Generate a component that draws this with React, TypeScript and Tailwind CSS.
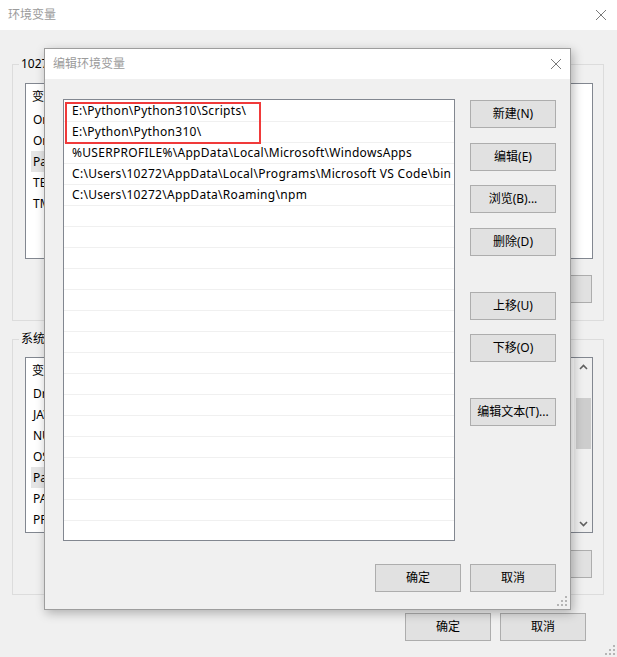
import React from 'react'

const font = "font-['Noto_Sans','Noto_Sans_CJK_SC',sans-serif]"

function Btn({ children, className = '' }: { children: React.ReactNode; className?: string }) {
  return (
    <div
      className={`w-[86px] h-[28px] shrink-0 flex items-center justify-center border border-[#adadad] bg-[#e1e1e1] text-[12px] text-black ${className}`}
    >
      {children}
    </div>
  )
}

function CloseX() {
  return (
    <svg width="12" height="12" viewBox="0 0 12 12">
      <path d="M1 1 L11 11 M11 1 L1 11" stroke="#7a7a7a" strokeWidth="1" fill="none" />
    </svg>
  )
}

function Chevron({ up }: { up?: boolean }) {
  return (
    <svg width="9" height="6" viewBox="0 0 9 6">
      <path d={up ? 'M1 5 L4.5 1.5 L8 5' : 'M1 1 L4.5 4.5 L8 1'} stroke="#606060" strokeWidth="1.6" fill="none" />
    </svg>
  )
}

// background list view, only the left edge shows past the dialog
function VarList({ rows, selected, scroll }: { rows: string[]; selected: number; scroll?: boolean }) {
  return (
    <div className="relative h-[176px] border border-[#828790] bg-white overflow-hidden">
      <div className="h-[25px] flex items-center pl-[6px] text-[12px]">
        <span className="w-[140px]">变量</span>
        <span>值</span>
      </div>
      {rows.map((r, i) => (
        <div
          key={i}
          className={`w-[160px] h-[21px] ml-[5px] pl-[2px] flex items-center text-[12px] text-black whitespace-nowrap ${i === selected ? 'bg-[#e5e5e5]' : ''}`}
        >
          {r}
        </div>
      ))}
      {scroll && (
        <div className="absolute right-0 top-0 bottom-0 w-[18px] bg-[#f0f0f0] flex flex-col items-center">
          <div className="h-[17px] flex items-center justify-center">
            <Chevron up />
          </div>
          <div className="mt-[23px] w-[15px] h-[51px] bg-[#cdcdcd]" />
          <div className="flex-1" />
          <div className="h-[17px] flex items-center justify-center">
            <Chevron />
          </div>
        </div>
      )}
    </div>
  )
}

export default function App() {
  const userVars = ['OneDrive', 'OneDriveConsumer', 'Path', 'TEMP', 'TMP']
  const sysVars = ['DriverData', 'JAVA_HOME', 'NUMBER_OF_PROCESSORS', 'OS', 'Path', 'PATHEXT', 'PROCESSOR_ARCHITECTURE']

  const paths = [
    'E:\\Python\\Python310\\Scripts\\',
    'E:\\Python\\Python310\\',
    '%USERPROFILE%\\AppData\\Local\\Microsoft\\WindowsApps',
    'C:\\Users\\10272\\AppData\\Local\\Programs\\Microsoft VS Code\\bin',
    'C:\\Users\\10272\\AppData\\Roaming\\npm',
  ]
  const rows = [...paths, ...Array(16).fill('')]

  return (
    <div className={`relative w-[617px] h-[657px] bg-[#f0f0f0] overflow-hidden ${font}`}>
      {/* background window: 环境变量 */}
      <div className="h-[30px] bg-white flex items-center justify-between pl-[8px] pr-[10px]">
        <span className="text-[12px] text-[#9b9b9b]">环境变量</span>
        <CloseX />
      </div>
      <div className="pl-[12px] pr-[13px]">
        <fieldset className="mt-[26px] h-[265px] border border-[#dcdcdc] pl-[12px] pr-[10px]">
          <legend className="-ml-[6px] px-[2px] text-[12px] leading-[16px] text-black">10272 的用户变量(U)</legend>
          <div className="mt-[11px]">
            <VarList rows={userVars} selected={2} />
          </div>
          <div className="mt-[16px] flex justify-end gap-[9px] pr-[1px]">
            <Btn>新建(N)...</Btn>
            <Btn>编辑(E)...</Btn>
            <Btn>删除(D)</Btn>
          </div>
        </fieldset>
        <fieldset className="mt-[10px] h-[264px] border border-[#dcdcdc] pl-[12px] pr-[10px]">
          <legend className="-ml-[6px] px-[2px] text-[12px] leading-[16px] text-black">系统变量(S)</legend>
          <div className="mt-[10px]">
            <VarList rows={sysVars} selected={4} scroll />
          </div>
          <div className="mt-[17px] flex justify-end gap-[9px] pr-[1px]">
            <Btn>新建(W)...</Btn>
            <Btn>编辑(I)...</Btn>
            <Btn>删除(L)</Btn>
          </div>
        </fieldset>
      </div>
      <div className="mt-[18px] flex justify-end gap-[9px] pr-[31px]">
        <Btn>确定</Btn>
        <Btn>取消</Btn>
      </div>

      {/* resize grip */}
      <svg className="absolute right-[2px] bottom-[2px]" width="10" height="10" viewBox="0 0 10 10">
        <g fill="#b5b5b5">
          <rect x="8" y="0" width="2" height="2" />
          <rect x="4" y="4" width="2" height="2" />
          <rect x="8" y="4" width="2" height="2" />
          <rect x="0" y="8" width="2" height="2" />
          <rect x="4" y="8" width="2" height="2" />
          <rect x="8" y="8" width="2" height="2" />
        </g>
      </svg>

      {/* dialog: 编辑环境变量 */}
      <div className="absolute left-[44px] top-[48px] w-[527px] h-[562px] border border-[#9d9d9d] bg-[#f0f0f0] flex flex-col shadow-[2px_3px_10px_rgba(0,0,0,0.28)]">
        <div className="h-[30px] bg-white flex items-center justify-between pl-[8px] pr-[8px]">
          <span className="text-[12px] text-[#9b9b9b]">编辑环境变量</span>
          <CloseX />
        </div>
        <div className="flex-1 flex flex-col pl-[18px] pt-[20px]">
          <div className="flex">
            <div className="relative w-[392px] h-[442px] border border-[#828790] bg-white pt-[1px] overflow-hidden">
              {rows.map((p, i) => (
                <div
                  key={i}
                  className="h-[21px] border-b border-[#f0f0f0] pl-[8px] flex items-center text-[12px] tracking-[0.3px] text-black whitespace-nowrap"
                >
                  {p}
                </div>
              ))}
              <div className="absolute left-[1px] top-[2px] w-[196px] h-[42px] border-2 border-[#f03a3a]" />
            </div>
            <div className="ml-[15px] flex flex-col">
              <Btn className="mt-[1px]">新建(N)</Btn>
              <Btn className="mt-[15px]">编辑(E)</Btn>
              <Btn className="mt-[14px]">浏览(B)...</Btn>
              <Btn className="mt-[15px]">删除(D)</Btn>
              <Btn className="mt-[36px]">上移(U)</Btn>
              <Btn className="mt-[14px]">下移(O)</Btn>
              <Btn className="mt-[36px]">编辑文本(T)...</Btn>
            </div>
          </div>
          <div className="mt-[23px] flex justify-end gap-[9px] pr-[14px]">
            <Btn>确定</Btn>
            <Btn>取消</Btn>
          </div>
        </div>
        <svg className="absolute right-[3px] bottom-[3px]" width="10" height="10" viewBox="0 0 10 10">
          <g fill="#b5b5b5">
            <rect x="8" y="0" width="2" height="2" />
            <rect x="4" y="4" width="2" height="2" />
            <rect x="8" y="4" width="2" height="2" />
            <rect x="0" y="8" width="2" height="2" />
            <rect x="4" y="8" width="2" height="2" />
            <rect x="8" y="8" width="2" height="2" />
          </g>
        </svg>
      </div>
    </div>
  )
}
